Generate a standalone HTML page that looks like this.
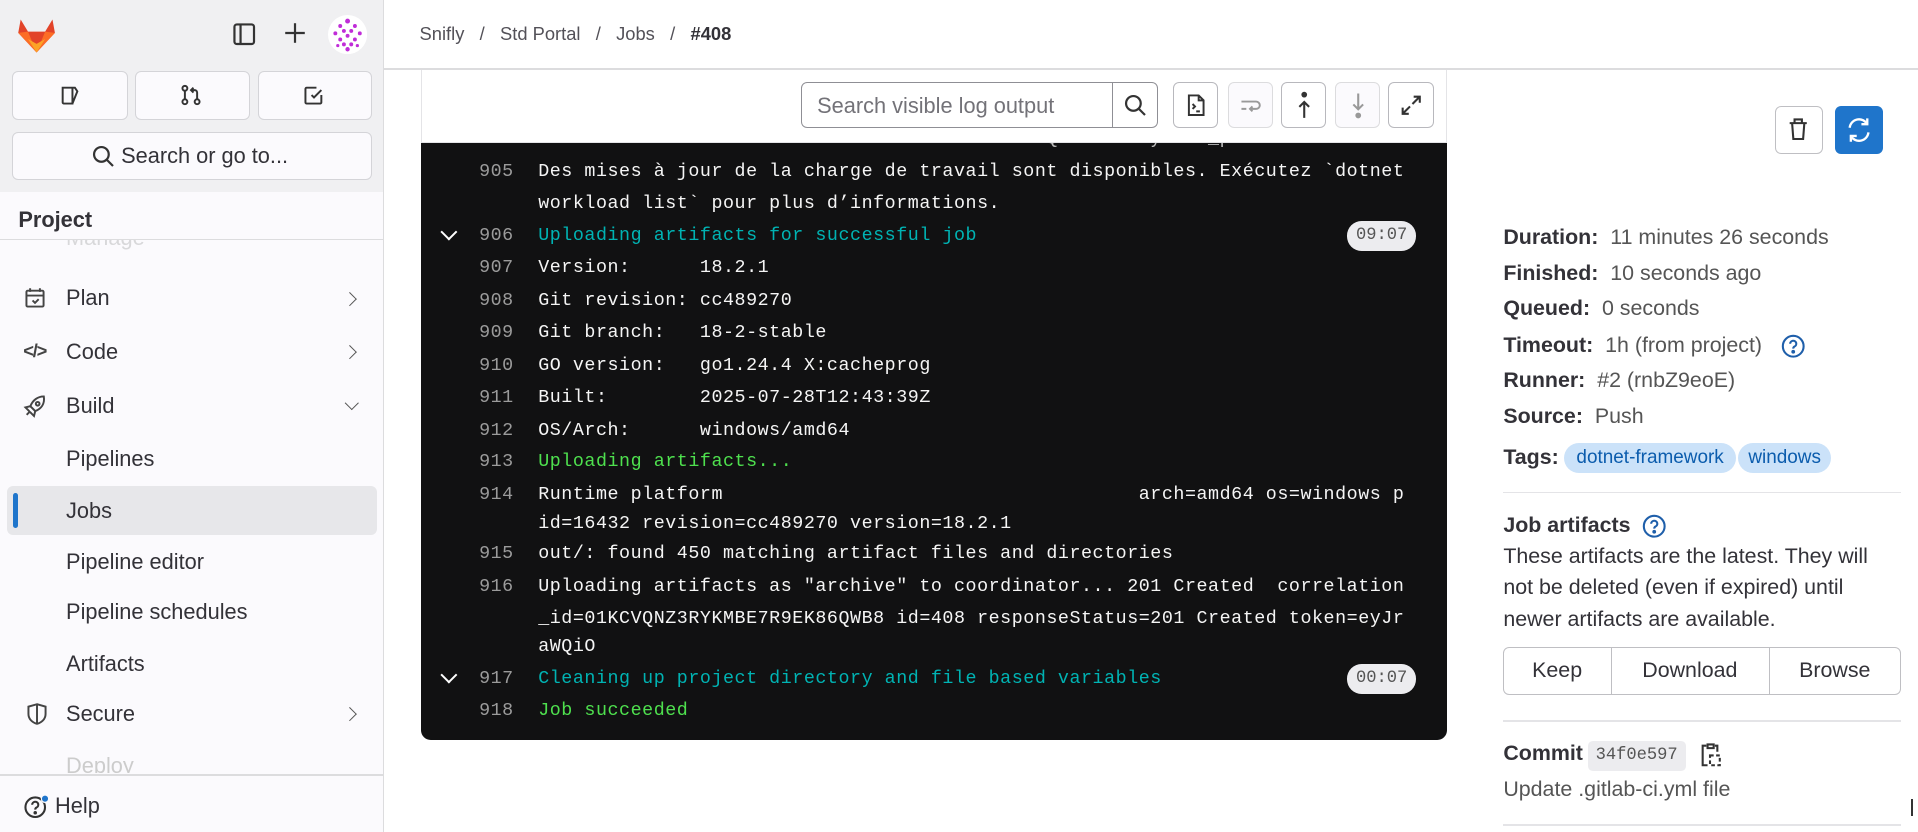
<!DOCTYPE html>
<html><head><meta charset="utf-8"><style>
html,body{margin:0;padding:0;width:1918px;height:832px;overflow:hidden;background:#fff}
#z{zoom:1.22321;width:1568px;height:680px;position:relative;font-family:"Liberation Sans",sans-serif;color:#3a383f}
.a{position:absolute}
.sb{left:0;top:0;width:313px;height:680px;background:#fbfafd;border-right:1px solid #dcdcde}
.sbt{left:0;top:0;width:313px;height:157px;background:#f0f0f2}
.btn{position:absolute;background:#fbfafd;border:1px solid #d4d4d8;border-radius:5px;box-sizing:border-box}
.nav{position:absolute;left:54px;font-size:17.8px;color:#333238}
.chev{position:absolute;left:282px;width:7px;height:7px;border-right:1.6px solid #555;border-top:1.6px solid #555;transform:rotate(45deg)}
.log{font-family:"Liberation Mono",monospace;font-size:15px;letter-spacing:0.45px;color:#f5f5f5}
.ln{position:absolute;left:372px;width:48px;text-align:right;color:#9b9b9b}
.lt{position:absolute;left:440px;white-space:pre}
.cy{color:#00b3b3}.gr{color:#4ee04e}
.ts{position:absolute;left:1101px;width:57px;height:24px;border-radius:12px;background:#ececef;color:#555;text-align:center;line-height:24px;font-size:14px;letter-spacing:0}
.k{font-weight:bold;color:#333238}
.d{position:absolute;left:1229px;font-size:17.5px;color:#555}
.tb{position:absolute;top:67px;width:37px;height:38px;border:1px solid #b8b8bd;border-radius:5px;box-sizing:border-box;background:#fff}
.hr{position:absolute;left:1229px;width:325px;height:1px;background:#e4e4e7}
</style></head><body><div id="z">
<div class="a sb"></div><div class="a sbt"></div>
<svg class="a" style="left:14px;top:14px" width="32" height="30" viewBox="0 0 32 30"><path d="M3 2 L9 12 H23 L29 2 L31 13 L16 29 L1 13Z" fill="#e24329"/><path d="M1 13 L9 12 L16 29Z" fill="#fc6d26"/><path d="M31 13 L23 12 L16 29Z" fill="#fc6d26"/><path d="M9 18 L16 29 L23 18 L16 22Z" fill="#fca326"/></svg>
<svg class="a" style="left:190px;top:18px" width="20" height="20" viewBox="0 0 20 20" fill="none" stroke="#333" stroke-width="1.8"><rect x="2" y="2" width="16" height="16" rx="2"/><line x1="7" y1="2" x2="7" y2="18"/></svg>
<svg class="a" style="left:232px;top:18px" width="18" height="18" viewBox="0 0 18 18" stroke="#333" stroke-width="1.8"><line x1="9" y1="1" x2="9" y2="17"/><line x1="1" y1="9" x2="17" y2="9"/></svg>
<svg class="a" style="left:268px;top:12px" width="32" height="32" viewBox="0 0 32 32"><circle cx="16" cy="16" r="16" fill="#fff"/><g fill="#c02cd8"><circle cx="16" cy="5" r="2"/><circle cx="10" cy="9" r="1.6"/><circle cx="22" cy="9" r="1.6"/><circle cx="6" cy="15" r="1.6"/><circle cx="26" cy="15" r="1.6"/><circle cx="13" cy="13" r="1.6"/><circle cx="19" cy="13" r="1.6"/><circle cx="16" cy="17" r="1.6"/><circle cx="10" cy="20" r="1.6"/><circle cx="22" cy="20" r="1.6"/><circle cx="13" cy="24" r="1.6"/><circle cx="19" cy="24" r="1.6"/><circle cx="16" cy="28" r="1.8"/><circle cx="8" cy="25" r="1.3"/><circle cx="24" cy="25" r="1.3"/></g></svg>
<div class="btn" style="left:10px;top:58px;width:95px;height:40px"></div>
<div class="btn" style="left:110px;top:58px;width:94px;height:40px"></div>
<div class="btn" style="left:211px;top:58px;width:93px;height:40px"></div>
<svg class="a" style="left:48px;top:69px" width="18" height="18" viewBox="0 0 18 18" fill="none" stroke="#333" stroke-width="1.6"><path d="M3 3h8v13H4a1 1 0 0 1-1-1z M11 3h2l2 3-4 10"/></svg>
<svg class="a" style="left:147px;top:69px" width="18" height="18" viewBox="0 0 18 18" fill="none" stroke="#333" stroke-width="1.6"><circle cx="4" cy="3.5" r="2"/><circle cx="4" cy="14.5" r="2"/><circle cx="14" cy="14.5" r="2"/><path d="M4 5.5v7M14 12.5V7a2 2 0 0 0-2-2H9m2-2-2 2 2 2"/></svg>
<svg class="a" style="left:248px;top:69px" width="18" height="18" viewBox="0 0 18 18" fill="none" stroke="#333" stroke-width="1.6"><path d="M15 9v6a1 1 0 0 1-1 1H3a1 1 0 0 1-1-1V4a1 1 0 0 1 1-1h8"/><path d="M7 9l2 2 6-6"/></svg>
<div class="btn" style="left:10px;top:108px;width:294px;height:39px"></div>
<svg class="a" style="left:74px;top:118px" width="20" height="20" viewBox="0 0 20 20" fill="none" stroke="#333" stroke-width="1.8"><circle cx="8.5" cy="8.5" r="6"/><line x1="13" y1="13" x2="18" y2="18"/></svg>
<div class="a" style="left:99px;top:117px;font-size:17.8px;color:#333238">Search or go to...</div>
<div class="a" style="left:0;top:196px;width:313px;height:10px;overflow:hidden"><div style="position:absolute;left:54px;top:-12px;font-size:17.8px;color:#d8d8da">Manage</div></div>
<div class="a" style="left:0;top:157px;width:313px;height:38px;background:#fbfafd;border-bottom:1px solid #dcdcde"></div>
<div class="a" style="left:15px;top:169px;font-size:17.8px;font-weight:bold;color:#333238">Project</div>
<svg class="a" style="left:20px;top:235px" width="18" height="18" viewBox="0 0 18 18" fill="none" stroke="#444" stroke-width="1.6"><rect x="2" y="3" width="14" height="13" rx="1"/><path d="M2 7h14M5 1v3M13 1v3M7 11l2 2 3-3"/></svg>
<div class="nav" style="top:233px">Plan</div><div class="chev" style="top:240px"></div>
<div class="a" style="left:19px;top:278px;font-size:15px;font-weight:bold;color:#444;letter-spacing:-1px">&lt;/&gt;</div>
<div class="nav" style="top:277px">Code</div><div class="chev" style="top:284px"></div>
<svg class="a" style="left:19px;top:322px" width="20" height="20" viewBox="0 0 20 20" fill="none" stroke="#444" stroke-width="1.6"><path d="M17 2c-5 0-9 3-11 8l4 4c5-2 8-6 7-12z"/><circle cx="12" cy="8" r="1.5"/><path d="M6 10l-4 1 3 3M10 14l-1 4-3-3M3 17l3-3"/></svg>
<div class="nav" style="top:321px">Build</div>
<div class="a" style="left:284px;top:325px;width:7px;height:7px;border-right:1.6px solid #555;border-bottom:1.6px solid #555;transform:rotate(45deg)"></div>
<div class="nav" style="top:365px">Pipelines</div>
<div class="a" style="left:6px;top:397px;width:302px;height:40px;background:#e7e7ea;border-radius:5px"></div>
<div class="a" style="left:11px;top:403px;width:4px;height:29px;background:#1f75cb;border-radius:2px"></div>
<div class="nav" style="top:407px">Jobs</div>
<div class="nav" style="top:449px">Pipeline editor</div>
<div class="nav" style="top:490px">Pipeline schedules</div>
<div class="nav" style="top:532px">Artifacts</div>
<svg class="a" style="left:21px;top:575px" width="18" height="18" viewBox="0 0 18 18" fill="none" stroke="#444" stroke-width="1.6"><path d="M9 1l7 2v6c0 4-3 7-7 8-4-1-7-4-7-8V3z M9 1v16"/></svg>
<div class="nav" style="top:573px">Secure</div><div class="chev" style="top:580px"></div>
<div class="nav" style="top:616px;color:#ccc;height:16px;overflow:hidden">Deploy</div>
<div class="a" style="left:0;top:633px;width:313px;height:1px;background:#dcdcde"></div>
<svg class="a" style="left:19px;top:650px" width="22" height="20" viewBox="0 0 22 20" fill="none" stroke="#333" stroke-width="1.7"><circle cx="10" cy="10" r="8"/><path d="M7.5 8a2.5 2.5 0 1 1 3.5 2.3c-.8.4-1 .9-1 1.7"/><circle cx="10" cy="14.5" r=".6" fill="#333"/><circle cx="18" cy="3" r="3" fill="#1f75cb" stroke="#fbfafd" stroke-width="1"/></svg>
<div class="nav" style="left:45px;top:648px">Help</div>
<div class="a" style="left:343px;top:19px;font-size:15px;color:#535158">Snifly &nbsp;&nbsp;/&nbsp;&nbsp; Std Portal &nbsp;&nbsp;/&nbsp;&nbsp; Jobs &nbsp;&nbsp;/&nbsp;&nbsp; <b style="color:#333238">#408</b></div>
<div class="a" style="left:314px;top:56px;width:1254px;height:1px;background:#dcdcde"></div>
<div class="a" style="left:344px;top:57px;width:839px;height:60px;background:#fff;border:1px solid #e4e4e7;border-top:none;box-sizing:border-box"></div>
<div class="a" style="left:655px;top:67px;width:292px;height:38px;border:1px solid #8f8f95;border-radius:5px;box-sizing:border-box"></div>
<div class="a" style="left:909px;top:67px;width:1px;height:38px;background:#8f8f95"></div>
<div class="a" style="left:668px;top:76px;font-size:17.8px;color:#737278">Search visible log output</div>
<svg class="a" style="left:918px;top:76px" width="20" height="20" viewBox="0 0 20 20" fill="none" stroke="#333" stroke-width="1.8"><circle cx="8.5" cy="8.5" r="6"/><line x1="13" y1="13" x2="18" y2="18"/></svg>
<div class="tb" style="left:959px"></div><div class="tb" style="left:1004px;background:#fbfafd;border-color:#dcdcde"></div><div class="tb" style="left:1047px"></div><div class="tb" style="left:1091px;background:#fbfafd;border-color:#dcdcde"></div><div class="tb" style="left:1135px"></div>
<svg class="a" style="left:968px;top:76px" width="20" height="20" viewBox="0 0 20 20" fill="none" stroke="#333" stroke-width="1.6"><path d="M4 2h8l4 4v12H4z M12 2v4h4"/><path d="M7 9l2 2-2 2M10 15h3"/></svg>
<svg class="a" style="left:1013px;top:76px" width="20" height="20" viewBox="0 0 20 20" fill="none" stroke="#999" stroke-width="1.6"><path d="M2 7h12a3 3 0 0 1 0 6H9m2-2-2 2 2 2M2 13h4"/></svg>
<svg class="a" style="left:1056px;top:74px" width="20" height="24" viewBox="0 0 20 24" fill="none" stroke="#333" stroke-width="1.7"><circle cx="10" cy="3" r="1.5" fill="#333"/><path d="M10 22V9M6 13l4-4 4 4"/></svg>
<svg class="a" style="left:1100px;top:74px" width="20" height="24" viewBox="0 0 20 24" fill="none" stroke="#999" stroke-width="1.7"><circle cx="10" cy="20" r="1.5" fill="#999"/><path d="M10 2v13M6 11l4 4 4-4"/></svg>
<svg class="a" style="left:1144px;top:76px" width="20" height="20" viewBox="0 0 20 20" fill="none" stroke="#333" stroke-width="1.7"><path d="M11 9l6-6M12 3h5v5M9 11l-6 6M3 12v5h5"/></svg>
<div class="a" style="left:344px;top:117px;width:839px;height:488px;background:#111112;border-radius:0 0 8px 8px"></div>
<div class="log">
<div class="a" style="left:344px;top:117px;width:839px;height:8px;overflow:hidden"><div class="lt" style="left:96px;top:-12px;color:#bbb">  Portal -&gt; C:\GitLab-Runner\builds\rnbZ9eoEQ\0\Snifly\Std_portal\out\</div><div class="ln" style="left:28px;top:-12px">904</div></div>
<div class="ln" style="top:132px">905</div><div class="lt" style="top:132px">Des mises à jour de la charge de travail sont disponibles. Exécutez `dotnet</div>
<div class="lt" style="top:158px">workload list` pour plus d’informations.</div>
<div class="a" style="left:362px;top:185px;width:8px;height:8px;border-right:1.7px solid #fff;border-bottom:1.7px solid #fff;transform:rotate(45deg)"></div>
<div class="ln" style="top:184px">906</div><div class="lt cy" style="top:184px">Uploading artifacts for successful job</div><div class="ts" style="top:181px">09:07</div>
<div class="ln" style="top:210px">907</div><div class="lt" style="top:210px">Version:      18.2.1</div>
<div class="ln" style="top:237px">908</div><div class="lt" style="top:237px">Git revision: cc489270</div>
<div class="ln" style="top:263px">909</div><div class="lt" style="top:263px">Git branch:   18-2-stable</div>
<div class="ln" style="top:290px">910</div><div class="lt" style="top:290px">GO version:   go1.24.4 X:cacheprog</div>
<div class="ln" style="top:316px">911</div><div class="lt" style="top:316px">Built:        2025-07-28T12:43:39Z</div>
<div class="ln" style="top:343px">912</div><div class="lt" style="top:343px">OS/Arch:      windows/amd64</div>
<div class="ln" style="top:369px">913</div><div class="lt gr" style="top:369px">Uploading artifacts...</div>
<div class="ln" style="top:396px">914</div><div class="lt" style="top:396px">Runtime platform                                    arch=amd64 os=windows p</div>
<div class="lt" style="top:419px">id=16432 revision=cc489270 version=18.2.1</div>
<div class="ln" style="top:444px">915</div><div class="lt" style="top:444px">out/: found 450 matching artifact files and directories</div>
<div class="ln" style="top:471px">916</div><div class="lt" style="top:471px">Uploading artifacts as "archive" to coordinator... 201 Created  correlation</div>
<div class="lt" style="top:497px">_id=01KCVQNZ3RYKMBE7R9EK86QWB8 id=408 responseStatus=201 Created token=eyJr</div>
<div class="lt" style="top:520px">aWQiO</div>
<div class="a" style="left:362px;top:547px;width:8px;height:8px;border-right:1.7px solid #fff;border-bottom:1.7px solid #fff;transform:rotate(45deg)"></div>
<div class="ln" style="top:546px">917</div><div class="lt cy" style="top:546px">Cleaning up project directory and file based variables</div><div class="ts" style="top:543px">00:07</div>
<div class="ln" style="top:572px">918</div><div class="lt gr" style="top:572px">Job succeeded</div>
</div>
<div class="a" style="left:1451px;top:87px;width:39px;height:39px;border:1px solid #bfbfc3;border-radius:5px;box-sizing:border-box"></div>
<svg class="a" style="left:1460px;top:96px" width="20" height="20" viewBox="0 0 20 20" fill="none" stroke="#333" stroke-width="1.7"><path d="M3 5h14M7 5V2h6v3M5 5l1 13h8l1-13"/></svg>
<div class="a" style="left:1500px;top:87px;width:39px;height:39px;background:#1f75cb;border-radius:5px"></div>
<svg class="a" style="left:1508px;top:95px" width="23" height="23" viewBox="0 0 24 24" fill="none" stroke="#fff" stroke-width="2"><path d="M4 10a8 8 0 0 1 15-3M20 14a8 8 0 0 1-15 3"/><path d="M19 2v5h-5M5 22v-5h5"/></svg>
<div class="d" style="top:184px"><span class="k">Duration:</span>&nbsp; 11 minutes 26 seconds</div>
<div class="d" style="top:213px"><span class="k">Finished:</span>&nbsp; 10 seconds ago</div>
<div class="d" style="top:242px"><span class="k">Queued:</span>&nbsp; 0 seconds</div>
<div class="d" style="top:272px"><span class="k">Timeout:</span>&nbsp; 1h (from project)</div>
<svg class="a" style="left:1456px;top:273px" width="20" height="20" viewBox="0 0 20 20" fill="none" stroke="#1f5faa" stroke-width="1.7"><circle cx="10" cy="10" r="8.5"/><path d="M7.5 8a2.5 2.5 0 1 1 3.5 2.3c-.8.4-1 .9-1 1.7"/><circle cx="10" cy="14.5" r=".7" fill="#1f5faa"/></svg>
<div class="d" style="top:301px"><span class="k">Runner:</span>&nbsp; #2 (rnbZ9eoE)</div>
<div class="d" style="top:330px"><span class="k">Source:</span>&nbsp; Push</div>
<div class="d" style="top:364px"><span class="k">Tags:</span></div>
<div class="a" style="left:1279px;top:362px;width:140px;height:25px;background:#cbe2f9;border-radius:13px;color:#0b5cad;font-size:15.5px;line-height:25px;text-align:center">dotnet-framework</div>
<div class="a" style="left:1421px;top:362px;width:76px;height:25px;background:#cbe2f9;border-radius:13px;color:#0b5cad;font-size:15.5px;line-height:25px;text-align:center">windows</div>
<div class="hr" style="top:402px"></div>
<div class="d" style="top:419px"><span class="k">Job artifacts</span></div>
<svg class="a" style="left:1342px;top:420px" width="20" height="20" viewBox="0 0 20 20" fill="none" stroke="#1f5faa" stroke-width="1.7"><circle cx="10" cy="10" r="8.5"/><path d="M7.5 8a2.5 2.5 0 1 1 3.5 2.3c-.8.4-1 .9-1 1.7"/><circle cx="10" cy="14.5" r=".7" fill="#1f5faa"/></svg>
<div class="d" style="top:442px;line-height:26px;color:#333238;width:326px">These artifacts are the latest. They will not be deleted (even if expired) until newer artifacts are available.</div>
<div class="a" style="left:1229px;top:529px;width:325px;height:39px;border:1px solid #bfbfc3;border-radius:5px;box-sizing:border-box"></div>
<div class="a" style="left:1317px;top:529px;width:1px;height:39px;background:#bfbfc3"></div>
<div class="a" style="left:1446px;top:529px;width:1px;height:39px;background:#bfbfc3"></div>
<div class="a" style="left:1229px;top:538px;width:88px;text-align:center;font-size:17.5px;color:#333238">Keep</div>
<div class="a" style="left:1317px;top:538px;width:129px;text-align:center;font-size:17.5px;color:#333238">Download</div>
<div class="a" style="left:1446px;top:538px;width:108px;text-align:center;font-size:17.5px;color:#333238">Browse</div>
<div class="hr" style="top:589px"></div>
<div class="d" style="top:606px"><span class="k">Commit</span></div>
<div class="a" style="left:1298px;top:606px;width:80px;height:24px;background:#ececef;border-radius:4px;font-family:'Liberation Mono',monospace;font-size:14px;color:#555;line-height:24px;text-align:center">34f0e597</div>
<svg class="a" style="left:1389px;top:607px" width="20" height="22" viewBox="0 0 20 22" fill="none" stroke="#333" stroke-width="1.7"><path d="M6 3H3v16h4M13 3h2v5M7 2h5v3H7z"/><rect x="9" y="11" width="8" height="8" stroke-dasharray="3 2"/></svg>
<div class="d" style="top:635px">Update .gitlab-ci.yml file</div>
<div class="hr" style="top:674px"></div>
<div class="a" style="left:1562px;top:653px;width:2px;height:14px;background:#333"></div>
</div></body></html>
